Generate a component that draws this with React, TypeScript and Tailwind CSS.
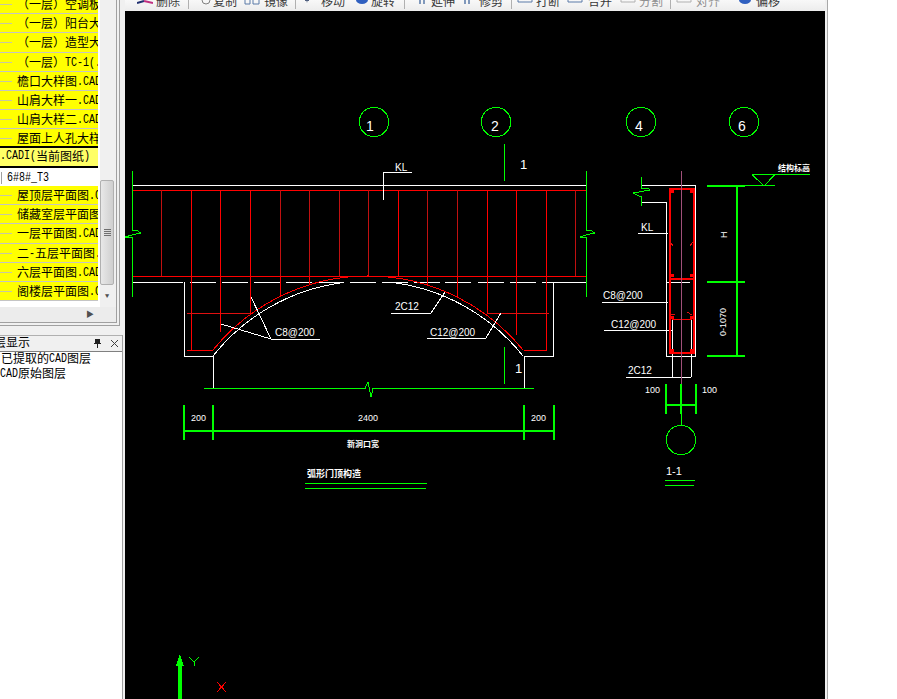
import React from 'react';

const CJK = "font-['Liberation_Mono','Noto_Sans_CJK_SC',monospace]";

// old CAD ui font: latin glyphs are half the width of the chinese ones
const Mixed: React.FC<{ text: string }> = ({ text }) => (
  <>
    {text.split(/([\x20-\x7e]+)/).map((part, i) =>
      /^[\x20-\x7e]+$/.test(part) ? (
        <span key={i} className="inline-block origin-bottom scale-y-[1.25] text-[10px]">
          {part}
        </span>
      ) : (
        <span key={i}>{part}</span>
      ),
    )}
  </>
);

// left drawing list, rows are cut off by the top of the window
const topRows = [
  '（一层）空调板',
  '（一层）阳台大',
  '（一层）造型大',
  '（一层）TC-1(.',
  '檐口大样图.CAD',
  '山肩大样一.CAD',
  '山肩大样二.CAD',
  '屋面上人孔大样',
];

const bottomRows = [
  '屋顶层平面图.C',
  '储藏室层平面图',
  '一层平面图.CAD',
  '二-五层平面图.',
  '六层平面图.CAD',
  '阁楼层平面图.C',
];

const Row: React.FC<{ label: string }> = ({ label }) => (
  <div className="relative flex h-[19.2px] shrink-0 items-center overflow-hidden whitespace-nowrap border-b border-[#c4c4c4] bg-[#ffff00] pl-[17px] pt-[4px]">
    <span className="absolute left-0 top-[9px] h-px w-[12px] bg-[#c8c8a0]" />
    <span className="text-[12px] leading-none text-black">
      <Mixed text={label} />
    </span>
  </div>
);

type Tool = { name: string; w: string; gap: string; icon: string; dim?: boolean; sep?: string };

const tools: Tool[] = [
  { name: '删除', w: 'w-[55px]', gap: 'gap-[3px]', icon: 'del', sep: 'ml-[8px]' },
  { name: '复制', w: 'w-[48px]', gap: 'gap-[1px]', icon: 'copy' },
  { name: '镜像', w: 'w-[51px]', gap: 'gap-[4px]', icon: 'mirror', sep: 'ml-[7px]' },
  { name: '移动', w: 'w-[49px]', gap: 'gap-[5px]', icon: 'move' },
  { name: '旋转', w: 'w-[50px]', gap: 'gap-[1px]', icon: 'rotate', sep: 'ml-[9px]' },
  { name: '延伸', w: 'w-[50px]', gap: 'gap-[2px]', icon: 'bars' },
  { name: '修剪', w: 'w-[48px]', gap: 'gap-[5px]', icon: 'bars', sep: 'ml-[8px]' },
  { name: '打断', w: 'w-[48px]', gap: 'gap-[3px]', icon: 'box' },
  { name: '合并', w: 'w-[52px]', gap: 'gap-[5px]', icon: 'box' },
  { name: '分割', w: 'w-[51px]', gap: 'gap-[3px]', icon: 'box', dim: true, sep: 'ml-[7px]' },
  { name: '对齐', w: 'w-[49px]', gap: 'gap-[4px]', icon: 'box', dim: true },
  { name: '偏移', w: 'w-[60px]', gap: 'gap-[3px]', icon: 'rotate' },
];

const ToolIcon: React.FC<{ kind: string; dim?: boolean }> = ({ kind, dim }) => {
  const c = dim ? '#b0b0b0' : '#5a7aa8';
  return (
    <svg width="16" height="6" viewBox="0 0 16 6" className="shrink-0">
      {kind === 'del' && (
        <>
          <path d="M0 3L7 1" stroke="#203070" strokeWidth="2" fill="none" />
          <path d="M7 1L16 3" stroke="#c03080" strokeWidth="2" fill="none" />
        </>
      )}
      {kind === 'copy' && <circle cx="10" cy="0" r="4" stroke="#808080" fill="none" />}
      {kind === 'mirror' && <path d="M1 0V4H6V0M9 0V4H15V0" stroke={c} fill="none" />}
      {kind === 'move' && <path d="M5 0H9V1H7.5L7 3L6.5 1H5Z" fill="#506080" />}
      {kind === 'rotate' && <path d="M2 0A6 4 0 0 0 14 0Z" fill="#3060c0" />}
      {kind === 'bars' && <path d="M7 0V4M11 0V4" stroke={c} strokeWidth="1.5" />}
      {kind === 'box' && <path d="M1 0V2H15V0" stroke={c} fill="none" />}
    </svg>
  );
};

const G = '#00ff00';
const R = '#ff0000';
const W = '#ffffff';

const Line: React.FC<{ d: string; c: string; w?: number }> = ({ d, c, w = 1 }) => (
  <path d={d} stroke={c} strokeWidth={w} fill="none" />
);

const Label: React.FC<{ x: number; y: number; size?: number; bold?: boolean; rotate?: boolean; children: React.ReactNode }> = ({
  x,
  y,
  size = 10,
  bold,
  rotate,
  children,
}) => (
  <text
    x={x}
    y={y}
    fill={W}
    fontSize={size}
    fontWeight={bold ? 700 : 400}
    fontFamily="'Liberation Sans','Noto Sans CJK SC',sans-serif"
    transform={rotate ? `rotate(-90 ${x} ${y})` : undefined}
  >
    {children}
  </text>
);

const CadDrawing: React.FC = () => {
  const beamStirrups = [161, 191, 220, 250, 280, 309, 339, 368, 398, 427, 457, 487, 516, 546, 575];
  const bright = [191, 220, 250, 398, 487, 516, 546];
  return (
    <svg viewBox="125 11 700 688" className="block h-full w-full" shapeRendering="crispEdges">
      {/* axis bubbles */}
      {[
        [374, 122, '1', 366],
        [496, 122, '2', 491],
        [641, 122, '4', 635],
        [744, 122, '6', 738],
      ].map(([cx, cy, t, tx]) => (
        <g key={String(t)}>
          <circle cx={Number(cx)} cy={Number(cy)} r={14.7} stroke={G} fill="none" />
          <Label x={Number(tx)} y={Number(cy) + 9} size={14}>
            {t}
          </Label>
        </g>
      ))}

      {/* section mark */}
      <Line d="M504.5 144V181M504.5 347V384" c={G} />
      <Label x={520} y={169} size={13}>1</Label>
      <Label x={515} y={373} size={13}>1</Label>

      {/* beam */}
      <Line d="M133 185.5H586M133 282.5H183M190 282.5H216M222 282.5H248M254 282.5H280M286 282.5H312M318 282.5H344M350 282.5H376M382 282.5H408M414 282.5H440M445 282.5H471M478 282.5H504M510 282.5H536M542 282.5H586" c={W} />
      <Line d="M133 190.5H586M133 276.5H586" c={R} />
      {beamStirrups.map((x) => (
        <Line key={x} d={`M${x + 0.5} 190V276`} c={bright.includes(x) ? R : '#c01010'} />
      ))}
      <Line d="M191.5 276V350M220.5 276V332M250.5 276V313M280.5 276V297M309.5 276V285M427.5 276V285M457.5 276V297M487.5 276V313M516.5 276V335M546.5 276V350" c={R} />
      <Line d="M187 313.5H251M487 313.5H549" c="#e01010" />
      <Line d="M187 350.5H213M524 350.5H547" c={R} />

      {/* break lines on beam ends */}
      <path d="M132.5 171V230H136L141 233L132 235L125 237L132.5 238V297" stroke={G} fill="none" />
      <path d="M586.5 171V230H590L595 233L586 235L580 237L586.5 238V297" stroke={G} fill="none" />

      {/* arch */}
      <path d="M213 350A199.3 199.3 0 0 1 523 350" stroke={R} fill="none" />
      <path d="M213 356A197.7 197.7 0 0 1 343 282.6M389 282.1A197.7 197.7 0 0 1 523 356" stroke={W} fill="none" />
      <Line d="M184.5 282V356.5H213.5V388M553.5 282V356.5H524.5V388" c={W} />
      <path d="M204 388.5H365L368 382L371 397L373 388.5H534" stroke={G} fill="none" />

      {/* arch leaders */}
      <path d="M221 324L271 339H320M251 297L271 339" stroke={W} fill="none" />
      <Label x={275} y={336}>C8@200</Label>
      <path d="M391 313H431L445 292" stroke={W} fill="none" />
      <Label x={395} y={310}>2C12</Label>
      <path d="M427 338H486L501 313" stroke={W} fill="none" />
      <Label x={430} y={336}>C12@200</Label>

      {/* KL tag */}
      <Line d="M412 172.5H383.5V200" c={W} />
      <Label x={395} y={171}>KL</Label>

      {/* dims under arch */}
      <Line d="M184 405V440M213 405V440M524 405V440M554 405V440" c={G} w={2} />
      <Line d="M184 431H554" c={G} w={2} />
      <Label x={191} y={421} size={9}>200</Label>
      <Label x={358} y={421} size={9}>2400</Label>
      <Label x={531} y={421} size={9}>200</Label>
      <Label x={347} y={447} size={8} bold>新洞口宽</Label>
      <Label x={307} y={477} size={9} bold>弧形门顶构造</Label>
      <Line d="M305 483.5H427M305 488.5H426" c={G} />

      {/* section 1-1 */}
      <path d="M641.5 177V188H648L650 190L633 193L641.5 197V206" stroke={G} fill="none" />
      <Line d="M642 185.5H695.5V356.5H666.5V202.5H642" c={W} />
      <Line d="M638 233.5H668M602 302.5H668M604 330.5H672M626 377.5H691" c={W} />
      <Line d="M672.5 319V377M691.5 319V377" c={W} />
      <Line d="M666 282.5H690" c={W} />
      <path d="M669.5 188.5H693.5V352.5H669.5Z" stroke={R} strokeWidth="2" fill="none" />
      <Line d="M669 278.5H693" c={R} w={2} />
      <Line d="M672 319.5H692" c={R} />
      <Line d="M671 191H674M690 191H693M671 275H674M690 275H693M671 317H674M690 317H693M671 350H674M690 350H693" c={R} w={3} />
      <Line d="M670 242L673 246M693 242L690 246M670 314H675M687 312L692 315" c="#e01010" />
      <Line d="M681.5 171V384" c="#a0507a" />
      <Label x={641} y={231}>KL</Label>
      <Label x={603} y={299}>C8@200</Label>
      <Label x={611} y={328}>C12@200</Label>
      <Label x={628} y={374}>2C12</Label>

      {/* level mark and vertical dims */}
      <Line d="M752 174.5H810M752 174.5L764 186M775 174.5L764 186M745 185.5H775" c={G} />
      <Label x={778} y={171} size={8} bold>结构标高</Label>
      <Line d="M707 186H745M707 282H745M707 356H745M736.5 186V356" c={G} w={2} />
      <Label x={727} y={238} size={9} rotate>H</Label>
      <Label x={726} y={336} size={9} rotate>0-1070</Label>

      {/* small section dims */}
      <Line d="M666 384V414M681 384V414M696 384V414M666 405H696" c={G} w={2} />
      <Line d="M681.5 414V426" c={G} />
      <Label x={645} y={393} size={9}>100</Label>
      <Label x={702} y={393} size={9}>100</Label>
      <circle cx={681} cy={440} r={14.7} stroke={G} fill="none" />
      <Label x={666} y={475} size={11}>1-1</Label>
      <Line d="M665 480.5H695M665 485.5H694" c={G} />

      {/* UCS */}
      <path d="M180 654L184 666H176Z" fill={G} />
      <Line d="M180 664V699" c={G} w={4} />
      <path d="M189 657L194 662L199 657M194 662V666" stroke={G} fill="none" />
      <path d="M217 682L226 692M226 682L217 692" stroke={R} fill="none" />
    </svg>
  );
};

export default function App() {
  return (
    <div className={`flex h-[699px] w-[897px] overflow-hidden bg-white ${CJK}`}>
      {/* left docks */}
      <aside className="flex h-full w-[125px] shrink-0 flex-col bg-[#f0f0f0]">
        <div className="mr-[5px] flex h-[326px] shrink-0 border-b-[4px] border-r-[4px] border-double border-[#a0a0a0]">
          <div className="flex min-w-0 flex-1 flex-col">
            <div className="flex min-h-0 flex-1">
              <div className="flex w-[98px] shrink-0 flex-col overflow-hidden bg-white">
                {/* first row starts above the window, last one runs under the black frame */}
                <div className="mt-[-5px] flex h-[151px] shrink-0 flex-col overflow-hidden">
                  {topRows.map((r) => (
                    <Row key={r} label={r} />
                  ))}
                </div>
                <div className="flex h-[22px] shrink-0 items-center whitespace-nowrap border-y-2 border-black bg-[#ffff66] pt-[2px] text-[12px] leading-none">
                  <Mixed text=".CADI(" />
                  当前图纸
                  <Mixed text=")" />
                </div>
                <div className="flex h-[18px] shrink-0 items-center whitespace-nowrap bg-white pt-[1px] text-[10px] leading-none">
                  <span className="mr-[5px] h-[12px] w-[2px] border-r border-[#a0a0a0]" />
                  <span className="inline-block origin-center scale-y-[1.25]">6#8#_T3</span>
                </div>
                {bottomRows.map((r) => (
                  <Row key={r} label={r} />
                ))}
                <div className="flex-1 bg-white" />
              </div>
              <div className="w-[2px] shrink-0 bg-white" />
              {/* vertical scrollbar */}
              <div className="flex w-[14px] shrink-0 flex-col bg-[#f0f0f0]">
                <div className="h-[180px] shrink-0" />
                <div className="flex h-[105px] shrink-0 items-center justify-center rounded-[2px] border border-[#b0b0b0] bg-gradient-to-r from-[#e8e8e8] to-[#cfcfcf]">
                  <div className="h-[7px] w-[7px] bg-[linear-gradient(#707070_1px,transparent_1px)] bg-[length:7px_2px]" />
                </div>
                <div className="flex flex-1 items-center justify-center text-[7px] leading-none text-[#505050]">▼</div>
              </div>
              <div className="w-[2px] shrink-0" />
            </div>
            {/* horizontal scrollbar */}
            <div className="flex h-[15px] shrink-0 items-center justify-end bg-[#ececec] pr-[22px] text-[8px] leading-none text-[#505050]">
              ▶
            </div>
          </div>
        </div>
        <div className="mr-[2px] mt-[9px] flex min-h-0 flex-1 flex-col border-r border-[#a0a0a0]">
          <div className="flex h-[14px] shrink-0 items-center justify-between overflow-hidden whitespace-nowrap border-t border-[#b0b0b0] pr-[3px] pt-[2px] text-[12px] leading-none">
            <span className="ml-[-18px]">图层显示</span>
            <span className="flex items-center gap-[8px] text-[11px] text-[#202020]">
              <svg width="9" height="11" viewBox="0 0 9 11" shapeRendering="crispEdges">
                <path d="M2 1H7V5H8V6H1V5H2ZM4 6V10H5V6" fill="#202020" />
              </svg>
              <svg width="9" height="9" viewBox="0 0 9 9">
                <path d="M1 1L8 8M8 1L1 8" stroke="#404040" />
              </svg>
            </span>
          </div>
          <div className="mt-[2px] flex-1 overflow-hidden whitespace-nowrap border-t border-[#808080] bg-white pt-[1px] text-[12px] leading-[14px] text-black">
            <div className="pl-[1px]">
              已提取的
              <Mixed text="CAD" />
              图层
            </div>
            <div>
              <Mixed text="CAD" />
              原始图层
            </div>
          </div>
        </div>
      </aside>

      {/* main area */}
      <main className="flex h-full w-[703px] shrink-0 flex-col border-r border-[#a8a8a8] bg-[#f0f0f0] pr-[2px]">
        <div className="flex h-[11px] shrink-0 items-start overflow-hidden bg-gradient-to-b from-[#f8f8f8] to-[#ececec]">
          {tools.map((t) => (
            <React.Fragment key={t.name}>
              <div className={`flex ${t.w} ${t.gap} shrink-0 items-start justify-end ${t.dim ? 'text-[#909090]' : 'text-[#383838]'}`}>
                <ToolIcon kind={t.icon} dim={t.dim} />
                <span className="mt-[-6px] whitespace-nowrap font-['Noto_Sans_CJK_SC',sans-serif] text-[12px] leading-[14px]">{t.name}</span>
              </div>
              {t.sep && <div className={`${t.sep} h-[9px] w-px shrink-0 bg-[#b0b0b0]`} />}
            </React.Fragment>
          ))}
        </div>
        <div className="min-h-0 flex-1 bg-black">
          <CadDrawing />
        </div>
      </main>
      <div className="flex-1 bg-white" />
    </div>
  );
}
